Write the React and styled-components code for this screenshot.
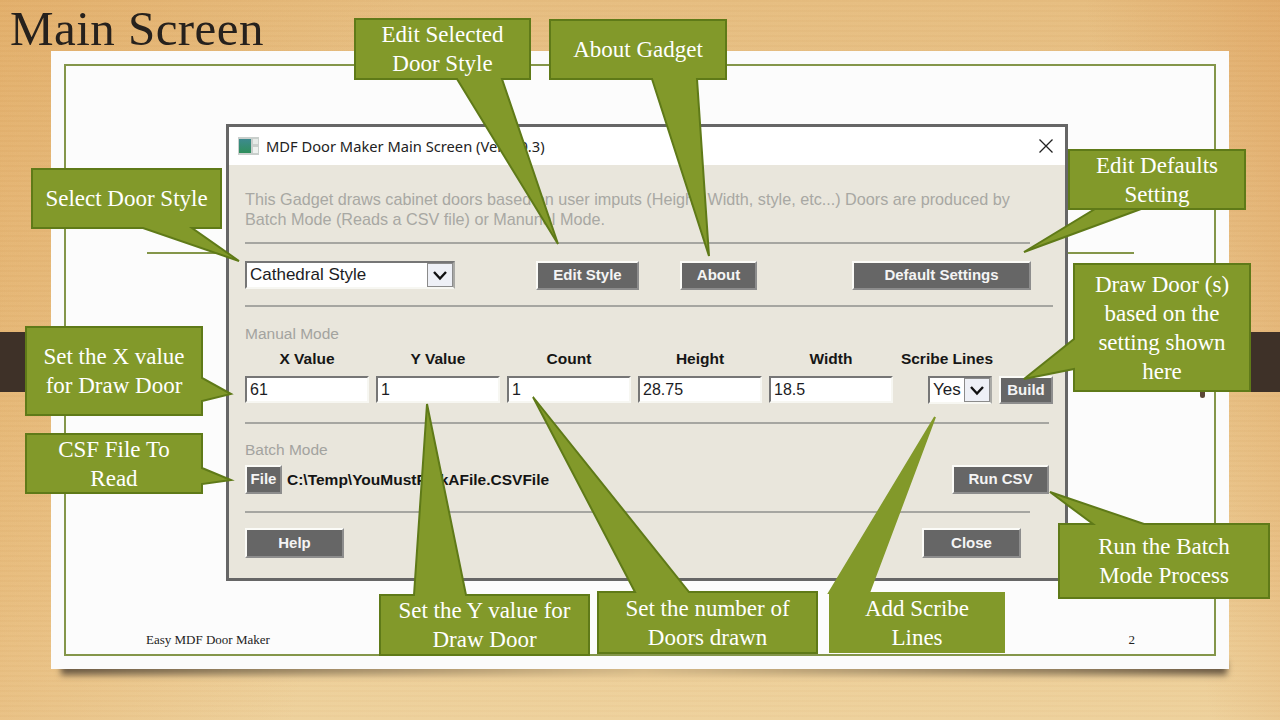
import React from 'react';
import styled, { createGlobalStyle } from 'styled-components';

const GlobalStyle = createGlobalStyle`
  html, body {
    margin: 0;
    padding: 0;
    overflow: hidden;
  }
`;

const callouts = [
  { box: [31, 168, 191, 61], edge: 'bottom', from: 143, to: 192, tip: [239, 261], lines: ['Select Door Style'] },
  { box: [354, 18, 177, 62], edge: 'bottom', from: 457, to: 502, tip: [558, 244], lines: ['Edit Selected', 'Door Style'] },
  { box: [549, 19, 178, 61], edge: 'bottom', from: 652, to: 697, tip: [709, 256], lines: ['About Gadget'] },
  { box: [1068, 149, 178, 61], edge: 'bottom', from: 1141, to: 1095, tip: [1024, 252], lines: ['Edit Defaults', 'Setting'] },
  { box: [1073, 263, 178, 129], edge: 'left', from: 369, to: 339, tip: [1024, 379], lines: ['Draw Door (s)', 'based on the', 'setting shown', 'here'] },
  { box: [25, 326, 178, 90], edge: 'right', from: 378, to: 401, tip: [231, 394], lines: ['Set the X value', 'for Draw Door'] },
  { box: [25, 433, 178, 61], edge: 'right', from: 468, to: 484, tip: [231, 480], lines: ['CSF File To', 'Read'] },
  { box: [379, 594, 211, 62], edge: 'top', from: 414, to: 466, tip: [427, 404], lines: ['Set the Y value for', 'Draw Door'] },
  { box: [597, 591, 221, 63], edge: 'top', from: 635, to: 689, tip: [533, 397], lines: ['Set the number of', 'Doors drawn'] },
  { box: [829, 592, 176, 61], edge: 'top', from: 829, to: 869, tip: [935, 417], lines: ['Add Scribe', 'Lines'], flat: true },
  { box: [1058, 523, 212, 76], edge: 'top', from: 1093, to: 1144, tip: [1050, 492], lines: ['Run the Batch', 'Mode Process'] },
];

const Stage = styled.div`
  position: relative;
  width: 1280px;
  height: 720px;
  overflow: hidden;
  background:
    linear-gradient(to bottom, transparent 332px, #3e3128 332px, #3e3128 392px, transparent 392px),
    repeating-linear-gradient(to bottom, rgba(150, 95, 30, 0.025) 0 2px, rgba(255, 240, 210, 0.025) 2px 5px),
    linear-gradient(100deg, rgba(222, 158, 82, 0.45) 0%, rgba(222, 158, 82, 0) 30%),
    linear-gradient(260deg, rgba(218, 150, 80, 0.45) 0%, rgba(218, 150, 80, 0) 14%),
    linear-gradient(to bottom, #e6bd80 0%, #e9c48a 30%, #eac78d 55%, #eccb93 80%, #eed19c 100%);
`;

const Title = styled.h1`
  margin: 0;
  padding-left: 10px;
  height: 51px;
  font: 400 49px/57px 'Liberation Serif', serif;
  letter-spacing: 0.45px;
  color: #26211d;
`;

const Paper = styled.div`
  position: relative;
  margin: 0 51px;
  height: 618px;
  padding: 13px;
  box-sizing: border-box;
  background: #fbfbfb;
  &::after {
    content: '';
    position: absolute;
    z-index: -1;
    left: 10px;
    right: 2px;
    bottom: -6px;
    height: 14px;
    background: linear-gradient(to right, #6b5a44 0%, #8f7c5c 14%, #d6ba88 50%, #8f7c5c 86%, #6b5a44 100%);
    filter: blur(3px);
  }
`;

const PaperLayer = styled.div`
  position: relative;
  z-index: 0;
`;

const Frame = styled.div`
  position: relative;
  display: flex;
  flex-direction: column;
  align-items: flex-start;
  height: 100%;
  box-sizing: border-box;
  border: 2px solid #84964a;
  background: #fcfcfc;
  &::before {
    content: '';
    position: absolute;
    left: 81px;
    right: 80px;
    top: 186px;
    height: 2px;
    background: #84964a;
  }
  &::after {
    content: '';
    position: absolute;
    right: 9px;
    top: 326px;
    width: 5px;
    height: 6px;
    border-radius: 0 0 3px 3px;
    background: #5a4636;
  }
`;

const Window = styled.div`
  position: relative;
  margin: 58px 0 0 160px;
  width: 842px;
  box-sizing: border-box;
  border: 3px solid #666;
  background: #e9e6dc;
`;

const TitleBar = styled.div`
  display: flex;
  align-items: center;
  height: 38px;
  padding: 0 12px 0 9px;
  background: #fff;
`;

const AppTitle = styled.span`
  margin-left: 7px;
  font: 400 14.7px/20px 'Noto Sans', sans-serif;
  color: #222;
`;

const CloseIcon = styled.svg`
  margin-left: auto;
  width: 14px;
  height: 14px;
`;

const Body = styled.div`
  padding: 24px 0 20px 16px;
  font-family: 'Liberation Sans', sans-serif;
`;

const Description = styled.p`
  margin: 0;
  font-size: 16.2px;
  line-height: 20px;
  color: #a8a8a3;
  white-space: nowrap;
`;

const Separator = styled.div`
  width: ${p => p.$width}px;
  height: 2px;
  margin-top: ${p => p.$top}px;
  background: #a6a6a1;
`;

const Toolbar = styled.div`
  display: flex;
  margin-top: 17px;
`;

const GadgetButton = styled.button`
  flex: none;
  width: ${p => p.$width}px;
  height: ${p => p.$height || 29}px;
  margin-left: ${p => p.$left || 0}px;
  padding: 0 0 2px;
  box-sizing: border-box;
  border: 2px solid;
  border-color: #fbfbf7 #8d8d8d #8d8d8d #fbfbf7;
  background: #666;
  color: #f4f4f4;
  font: 700 15px/1 'Liberation Sans', sans-serif;
`;

const DropDown = styled.div`
  flex: none;
  display: flex;
  align-items: stretch;
  width: ${p => p.$width}px;
  height: ${p => p.$height}px;
  margin-left: ${p => p.$left || 0}px;
  box-sizing: border-box;
  border: 2px solid;
  border-color: #767676 #a9a9a5 #f7f7f2 #767676;
  background: #fff;
  color: #1c1c24;
  font-size: 17px;
`;

const DropValue = styled.span`
  flex: 1;
  padding-left: 3px;
  align-self: center;
`;

const DropArrow = styled.span`
  display: flex;
  align-items: center;
  justify-content: center;
  width: 24px;
  border: 1px solid #8b8b8b;
  background: #eef0f6;
`;

const SectionLabel = styled.div`
  margin-top: ${p => p.$top}px;
  font-size: 15.5px;
  line-height: 20px;
  color: #a3a39f;
`;

const FieldGrid = styled.div`
  display: grid;
  grid-template-columns: repeat(5, 124px) 153px;
  column-gap: 7px;
  margin-top: ${p => p.$top}px;
`;

const FieldHead = styled.div`
  font-size: 15.5px;
  font-weight: 700;
  line-height: 20px;
  text-align: center;
  color: #161616;
  white-space: nowrap;
  width: ${p => p.$wide ? '94px' : 'auto'};
`;

const FieldInput = styled.input`
  width: 124px;
  height: 27px;
  padding: 0 0 0 3px;
  box-sizing: border-box;
  border: 2px solid;
  border-color: #767676 #f7f7f2 #f7f7f2 #767676;
  background: #fff;
  color: #1c1c24;
  font: 400 16px 'Liberation Sans', sans-serif;
  outline: none;
`;

const FieldTail = styled.div`
  display: flex;
  align-items: flex-start;
`;

const FileRow = styled.div`
  display: flex;
  align-items: center;
  width: 804px;
  margin-top: 5px;
`;

const FilePath = styled.span`
  margin-left: 5px;
  font-size: 15.5px;
  font-weight: 700;
  color: #141414;
`;

const PushRight = styled.span`
  margin-left: auto;
  display: flex;
`;

const FooterRow = styled.div`
  display: flex;
  justify-content: space-between;
  width: 776px;
  margin-top: 15px;
`;

const SlideFooter = styled.div`
  display: flex;
  justify-content: space-between;
  align-self: stretch;
  margin-top: auto;
  padding: 0 79px 7px 80px;
  font: 400 13px/14px 'Liberation Serif', serif;
  color: #222;
`;

const BalloonWrap = styled.div`
  position: absolute;
  z-index: 2;
  left: ${p => p.$x}px;
  top: ${p => p.$y}px;
  width: ${p => p.$w}px;
  height: ${p => p.$h}px;
`;

const BalloonShape = styled.svg`
  position: absolute;
  inset: 0;
  width: 100%;
  height: 100%;
  overflow: visible;
`;

const BalloonText = styled.div`
  position: relative;
  display: flex;
  flex-direction: column;
  align-items: center;
  justify-content: center;
  height: 100%;
  font: 400 23px/29px 'Liberation Serif', serif;
  color: #fff;
  white-space: nowrap;
`;

const balloonPoints = ({ box: [x, y, w, h], edge, from, to, tip }) => {
  const l = 1, t = 1, r = w - 1, b = h - 1;
  const tx = tip[0] - x, ty = tip[1] - y;
  const fx = from - x, fy = from - y, ex = to - x, ey = to - y;
  let pts;
  if (edge === 'top') pts = [[l, t], [fx, t], [tx, ty], [ex, t], [r, t], [r, b], [l, b]];
  if (edge === 'right') pts = [[l, t], [r, t], [r, fy], [tx, ty], [r, ey], [r, b], [l, b]];
  if (edge === 'bottom') pts = [[l, t], [r, t], [r, b], [ex, b], [tx, ty], [fx, b], [l, b]];
  if (edge === 'left') pts = [[l, t], [r, t], [r, b], [l, b], [l, fy], [tx, ty], [l, ey]];
  return pts.map(p => p.join(',')).join(' ');
};

const Balloon = (props) => {
  const { box, lines, flat } = props;
  return (
    <BalloonWrap $x={box[0]} $y={box[1]} $w={box[2]} $h={box[3]}>
      <BalloonShape>
        <polygon
          points={balloonPoints(props)}
          fill="#82992a"
          stroke={flat ? '#82992a' : '#5f7a18'}
          strokeWidth="2"
          strokeLinejoin="miter"
        />
      </BalloonShape>
      <BalloonText>
        {lines.map(line => <span key={line}>{line}</span>)}
      </BalloonText>
    </BalloonWrap>
  );
};

const Chevron = () => (
  <svg width="16" height="11" viewBox="0 0 16 11">
    <path d="M2 2 L8 8.5 L14 2" fill="none" stroke="#111" strokeWidth="2.4" />
  </svg>
);

const AppIcon = () => (
  <svg width="21" height="18" viewBox="0 0 21 18">
    <defs>
      <linearGradient id="appIconFill" x1="0" y1="0" x2="0" y2="1">
        <stop offset="0" stopColor="#3d8a8f" />
        <stop offset="1" stopColor="#2f8f5c" />
      </linearGradient>
    </defs>
    <rect width="21" height="18" fill="#c9cfcc" />
    <rect x="1" y="2" width="12" height="14" fill="url(#appIconFill)" />
    <rect x="15" y="2" width="5" height="5" fill="#e6ebe8" />
    <rect x="15" y="10" width="5" height="6" fill="#eef2ef" />
  </svg>
);

const App = () => (
  <Stage>
    <GlobalStyle />
    <Title>Main Screen</Title>
    <PaperLayer>
      <Paper>
        <Frame>
          <Window>
            <TitleBar>
              <AppIcon />
              <AppTitle>MDF Door Maker Main Screen (Ver 1.0.3)</AppTitle>
              <CloseIcon viewBox="0 0 14 14">
                <path d="M0.5 0.5 L13.5 13.5 M13.5 0.5 L0.5 13.5" stroke="#222" strokeWidth="1.3" fill="none" />
              </CloseIcon>
            </TitleBar>
            <Body>
              <Description>
                This Gadget draws cabinet doors based on user imputs (Height, Width, style, etc...) Doors are produced by
                <br />
                Batch Mode (Reads a CSV file) or Manunal Mode.
              </Description>
              <Separator $width={785} $top={13} />
              <Toolbar>
                <DropDown $width={210} $height={28}>
                  <DropValue>Cathedral Style</DropValue>
                  <DropArrow><Chevron /></DropArrow>
                </DropDown>
                <GadgetButton $width={103} $left={81}>Edit Style</GadgetButton>
                <GadgetButton $width={77} $left={41}>About</GadgetButton>
                <GadgetButton $width={179} $left={95}>Default Settings</GadgetButton>
              </Toolbar>
              <Separator $width={808} $top={15} />
              <SectionLabel $top={17}>Manual Mode</SectionLabel>
              <FieldGrid $top={5}>
                <FieldHead>X Value</FieldHead>
                <FieldHead>Y Value</FieldHead>
                <FieldHead>Count</FieldHead>
                <FieldHead>Height</FieldHead>
                <FieldHead>Width</FieldHead>
                <FieldHead $wide>Scribe Lines</FieldHead>
              </FieldGrid>
              <FieldGrid $top={7}>
                <FieldInput readOnly value="61" />
                <FieldInput readOnly value="1" />
                <FieldInput readOnly value="1" />
                <FieldInput readOnly value="28.75" />
                <FieldInput readOnly value="18.5" />
                <FieldTail>
                  <DropDown $width={64} $height={28} $left={28}>
                    <DropValue>Yes</DropValue>
                    <DropArrow><Chevron /></DropArrow>
                  </DropDown>
                  <GadgetButton $width={54} $height={28} $left={7}>Build</GadgetButton>
                </FieldTail>
              </FieldGrid>
              <Separator $width={804} $top={18} />
              <SectionLabel $top={16}>Batch Mode</SectionLabel>
              <FileRow>
                <GadgetButton $width={37}>File</GadgetButton>
                <FilePath>C:\Temp\YouMustPickAFile.CSVFile</FilePath>
                <PushRight>
                  <GadgetButton $width={97}>Run CSV</GadgetButton>
                </PushRight>
              </FileRow>
              <Separator $width={785} $top={17} />
              <FooterRow>
                <GadgetButton $width={99} $height={30}>Help</GadgetButton>
                <GadgetButton $width={99} $height={30}>Close</GadgetButton>
              </FooterRow>
            </Body>
          </Window>
          <SlideFooter>
            <span>Easy MDF Door Maker</span>
            <span>2</span>
          </SlideFooter>
        </Frame>
      </Paper>
    </PaperLayer>
    {callouts.map(c => <Balloon key={c.lines[0]} {...c} />)}
  </Stage>
);

export default App;
